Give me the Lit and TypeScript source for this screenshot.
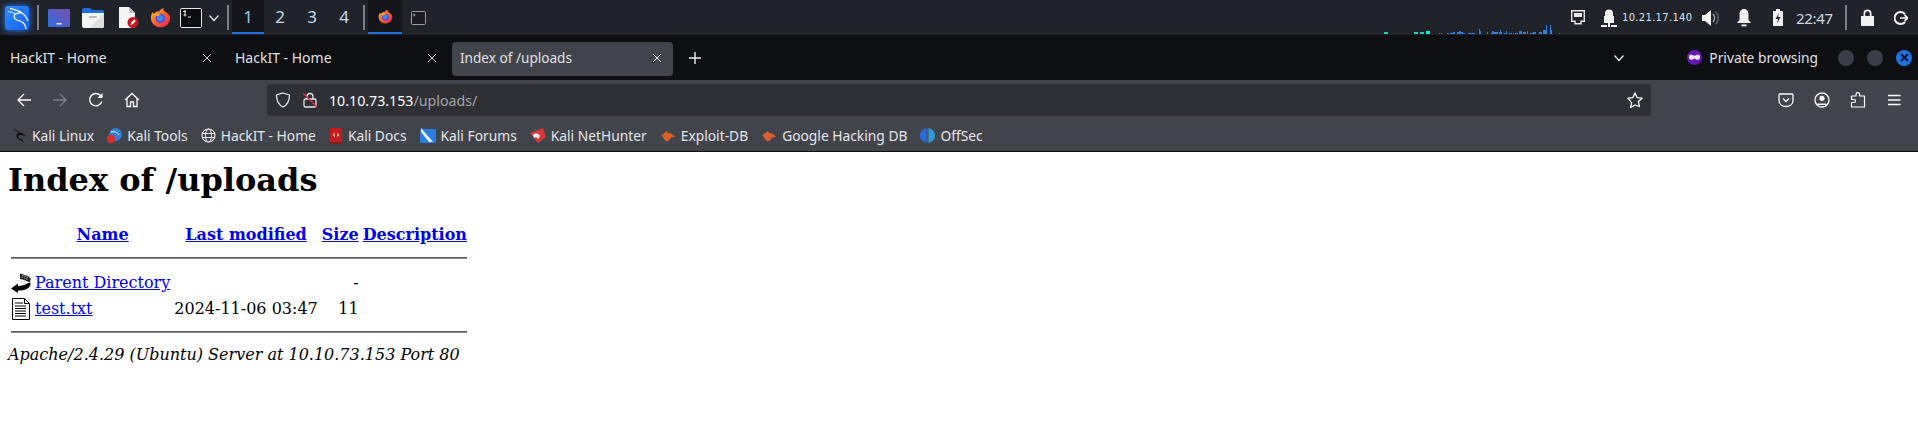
import { LitElement, html, css, svg } from "lit";
import { customElement } from "lit/decorators.js";

const firefox = (s: number) => html`<svg width=${s} height=${s} viewBox="0 0 24 24">
  <defs><linearGradient id="ffg" x1="0" y1="0" x2="1" y2="1"><stop offset="0" stop-color="#ffbd2e"/><stop offset=".55" stop-color="#ff5a2b"/><stop offset="1" stop-color="#e0224f"/></linearGradient></defs>
  <path d="M12 23C5.600 23 1 18.200 1 12.200 1 9.700 1.800 7.500 3.200 5.800L4.500 8C6 5.700 8.200 4.700 10.500 5 11 3.300 13 1.800 15.500 1c-.6 2 .2 3.300 2 4.500C20.500 7.500 23 9.500 23 12.500 23 18.500 18.400 23 12 23z" fill="url(#ffg)"/>
  <circle cx="11.800" cy="13" r="5.600" fill="#5b4fd8"/><circle cx="11.300" cy="12.500" r="3.400" fill="#3d8fe8"/>
  <path d="M5 9.500c2-1.800 5-2.300 7.500-1.200-1.300.2-2.300.8-3 1.700-1 .2-3 .2-4.500-.5z" fill="#ffb02e"/>
</svg>`;

const kali = html`<svg class="kali" width="24" height="24" viewBox="0 0 24 24">
  <defs><linearGradient id="kg" x1="0" y1="0" x2="1" y2="1"><stop offset="0" stop-color="#2f8dff"/><stop offset="1" stop-color="#1660e8"/></linearGradient></defs>
  <rect width="24" height="24" rx="3" fill="url(#kg)"/>
  <path d="M5 2.500C9 3.500 13.500 4.500 16.500 6.700 19.500 8.500 21.500 11 23 15M16.500 6.700C13 7 9 8 9 10.500 9 13.500 13 14.500 16 15.500 19 16.500 20.500 19 21 23" fill="none" stroke="#f4f8ff" stroke-width="1.300"/>
  <path d="M3 5.500C6 6 8.500 6.800 10.500 7.800M12 4.500l2 1.500" fill="none" stroke="#f4f8ff" stroke-width=".9"/>
</svg>`;

const sparkBars: [number, number, number, string][] = [
  [24, 32, 4, "#1dd3b0"], [54, 32, 4, "#1dd3b0"], [60, 32, 4, "#1dd3b0"], [66, 31, 4, "#12e6c8"],
  [79, 33, 1, "#2f7fe6"], [81, 33, 1, "#2f7fe6"], [87, 33, 2, "#2f7fe6"], [90, 33, 4, "#2f7fe6"], [93, 32, 2, "#2f7fe6"],
  [97, 32, 5, "#2f7fe6"], [99, 31, 2, "#2f7fe6"], [101, 32, 2, "#2f7fe6"], [103, 33, 2, "#2f7fe6"], [108, 33, 7, "#2f7fe6"],
  [119, 29, 1, "#2f7fe6"], [120, 31, 1, "#2f7fe6"], [127, 32, 1, "#2f7fe6"],
  [131, 33, 1, "#2f7fe6"], [132, 31, 2, "#2f7fe6"], [134, 32, 4, "#2f7fe6"], [139, 32, 3, "#2f7fe6"], [140, 30, 1, "#2f7fe6"], [144, 33, 3, "#2f7fe6"], [146, 31, 1, "#2f7fe6"], [149, 33, 3, "#2f7fe6"],
  [153, 33, 1, "#2f7fe6"], [155, 33, 3, "#2f7fe6"], [159, 31, 3, "#2f7fe6"], [163, 32, 3, "#2f7fe6"], [167, 31, 1, "#2f7fe6"], [170, 33, 3, "#2f7fe6"],
  [173, 32, 3, "#2f7fe6"], [179, 32, 3, "#2f7fe6"], [183, 30, 4, "#2f7fe6"], [186, 25, 1, "#2f7fe6"], [190, 25, 1, "#2f7fe6"], [191, 30, 1, "#2f7fe6"], [199, 33, 1, "#2f7fe6"],
];

@customElement("app-root")
export class AppRoot extends LitElement {
  static styles = css`
    :host { display: block; width: 1918px; height: 435px; background: #fff; overflow: hidden; font-family: "Noto Sans", sans-serif; }
    svg { display: block; flex: none; }
    .taskbar { height: 35px; background: #21232b; display: flex; align-items: center; color: #dfe3e8; }
    .tb-icon { display: flex; align-items: center; justify-content: center; flex: none; }
    .kali-wrap { margin-left: 5px; width: 24px; height: 24px; filter: drop-shadow(0 0 3px #1e78ff); }
    .sep { width: 2px; height: 25px; background: #7d8087; flex: none; }
    .s1 { margin-left: 8px; }
    .w-app { margin-left: 9px; }
    .w-folder { margin-left: 12px; }
    .w-doc { margin-left: 14px; }
    .w-ff { margin-left: 11px; }
    .w-term { margin-left: 9px; }
    .w-chev { margin-left: 5px; }
    .s2 { margin-left: 6px; }
    .desks { display: flex; margin-left: 3px; align-self: flex-start; }
    .desk { width: 32px; height: 34px; box-sizing: border-box; display: flex; align-items: center; justify-content: center; font-size: 17px; color: #c4dcf2; border-bottom: 2px solid transparent; }
    .desk.on { background: #14161b; border-bottom-color: #1f73e0; color: #9cc6ee; }
    .s3 { margin-left: 3px; }
    .ff-task { margin-left: 3px; width: 34px; height: 34px; align-self: flex-start; box-sizing: border-box; background: #14161b; border-bottom: 2px solid #1f73e0; display: flex; align-items: center; justify-content: center; }
    .t-term { margin-left: 9px; }
    .spark { margin-left: auto; align-self: flex-start; }
    .tray { display: flex; align-items: center; padding-right: 10px; }
    .m-netlock { margin-left: 16px; }
    .ip { letter-spacing: .3px; color: #dde3ea; margin-left: 5px; width: 71px; white-space: nowrap; font-family: "DejaVu Sans", sans-serif; font-size: 10px; }
    .m-vol { margin-left: 9px; }
    .m-bell { margin-left: 18px; }
    .m-bat { margin-left: 22px; }
    .clock { font-size: 15px; letter-spacing: -.3px; color: #cfd8e2; margin-left: 13px; width: 37px; white-space: nowrap; }
    .m-sep { margin-left: 12px; }
    .m-lock { margin-left: 14px; }
    .m-out { margin-left: 20px; }
    .tabs { height: 45px; background: #0e0f13; display: flex; align-items: center; color: #e0e0e4; font-size: 14px; box-sizing: border-box; }
    .tab { width: 224px; height: 34px; box-sizing: border-box; padding: 0 12px 2px 10px; display: flex; align-items: center; justify-content: space-between; white-space: nowrap; flex: none; margin-top: 2px; }
    .tab + .tab { margin-left: 1px; }
    .tab.on { background: #42444c; border-radius: 4px; margin-left: 3px; padding: 0 11px 2px 8px; width: 221px; font-size: 13.600px; }
    .plus { margin-left: 15px; }
    .chev { margin-left: auto; }
    .pb { display: flex; align-items: center; margin-left: 61px; gap: 7px; font-size: 13.800px; white-space: nowrap; }
    .dots { display: flex; gap: 13px; margin-left: 20px; margin-right: 6px; }
    .dot { width: 16px; height: 16px; border-radius: 50%; background: #3a3e48; flex: none; }
    .dot.x { background: #1f73e0; display: flex; align-items: center; justify-content: center; }
    .nav { height: 40px; background: #42444c; display: flex; align-items: center; color: #fbfbfe; }
    .nav-btn { flex: none; display: flex; justify-content: center; align-items: center; width: 36px; }
    .m-back { margin-left: 6px; }
    .urlbar { margin-left: 117px; width: 1384px; height: 32px; background: #2f3036; border-radius: 4px; display: flex; align-items: center; box-sizing: border-box; padding: 0 8px; flex: none; font-size: 14.200px; }
    .m-ulock { margin-left: 12px; }
    .url { margin-left: 12px; color: #fbfbfe; white-space: nowrap; }
    .url span { color: #a3a4a9; }
    .star { margin-left: auto; }
    .m-pocket { margin-left: 117px; }
    .bm { height: 31px; background: #42444c; display: flex; align-items: center; padding-left: 12px; color: #e6e6ea; font-size: 13.800px; border-bottom: 1px solid #0e0f13; }
    .bm-item { display: flex; align-items: center; gap: 5px; white-space: nowrap; margin-right: 13px; }
    .page { font-family: "DejaVu Serif", serif; color: #000; font-size: 16px; padding: 0 8px; }
    .page h1 { font-size: 32px; margin: 9.440px 0 21.440px; font-weight: bold; }
    .page a { color: #0000ee; text-decoration: underline; }
    .page td, .page th { padding: 1px; }
    .page .r { text-align: right; }
    .page address { font-style: italic; }
    .page hr { margin: 7px 0 9px; border: none; border-top: 1px solid #5c5c5c; border-bottom: 1px solid #8a8a8a; height: 0; }
    .ph { width: 20px; height: 22px; }
  `;

  render() {
    const chevron = (c = "#e6e6ea") => html`<svg width="14" height="14" viewBox="0 0 14 14"><path d="M2.500 4.500 7 9.500l4.500-5" fill="none" stroke=${c} stroke-width="1.300"/></svg>`;
    const bmText = (t: string, icon: unknown) => html`<div class="bm-item">${icon}<span>${t}</span></div>`;
    const flame = html`<svg width="16" height="14" viewBox="0 0 16 14"><path d="M1 6c3-1 4-3 6-4l1 2c3 0 6 2 7 4l-4 .5C10 11 8 13 6 12 4 11 4 9 1 6z" fill="#d9602a"/></svg>`;
    const close = (c: string) => html`<svg width="10" height="10" viewBox="0 0 10 10"><path d="M1 1l8 8M9 1l-8 8" stroke=${c} stroke-width="1"/></svg>`;
    return html`
      <div class="taskbar">
        <div class="tb-icon kali-wrap">${kali}</div>
        <div class="sep s1"></div>
        <div class="tb-icon w-app"><svg width="22" height="18" viewBox="0 0 22 18"><defs><linearGradient id="wa" x1="0" y1="1" x2="1" y2="0"><stop offset="0" stop-color="#2f6fe0"/><stop offset="1" stop-color="#7a4fb0"/></linearGradient></defs><rect width="22" height="18" rx="1" fill="url(#wa)"/><rect x="8.500" y="14" width="5" height="1.500" fill="#e8e8f4"/></svg></div>
        <div class="tb-icon w-folder"><svg width="22" height="20" viewBox="0 0 22 20"><path d="M0 2q0-2 2-2h6l2 2h10q2 0 2 2v3H0z" fill="#1f6fd8"/><path d="M0 5h22v13q0 2-2 2H2q-2 0-2-2z" fill="#f2f3f4"/><path d="M22 5v13q0 2-2 2H8z" fill="#dcdee0"/><rect x="7" y="8" width="8" height="2" rx="1" fill="#b8babd"/></svg></div>
        <div class="tb-icon w-doc"><svg width="21" height="21" viewBox="0 0 21 21"><path d="M1 0h10l6 6v15H1z" fill="#f4f4f4"/><path d="M11 0l6 6h-6z" fill="#c4c4c4"/><circle cx="15" cy="15.500" r="5.500" fill="#c4161c"/><path d="M12.500 18l1-3 3-2.500 1.300 1.300-2.500 3z" fill="#fff"/></svg></div>
        <div class="tb-icon w-ff">${firefox(21)}</div>
        <div class="tb-icon w-term"><svg width="22" height="20" viewBox="0 0 22 20"><rect x=".5" y=".5" width="21" height="19" rx="1" fill="#0c0d10" stroke="#e8e8e8"/><path d="M3.500 7h3M3 3.500h3M5 2v6.500M8 9h3" stroke="#e8e8e8" stroke-width="1" fill="none"/></svg></div>
        <div class="tb-icon w-chev">${chevron("#e6e6ea")}</div>
        <div class="sep s2"></div>
        <div class="desks">
          <div class="desk on">1</div><div class="desk">2</div><div class="desk">3</div><div class="desk">4</div>
        </div>
        <div class="sep s3"></div>
        <div class="ff-task">${firefox(15)}</div>
        <div class="tb-icon t-term"><svg width="15" height="14" viewBox="0 0 15 14"><rect x=".5" y=".5" width="14" height="13" rx="1" fill="#191b20" stroke="#9a9ca2"/><path d="M2.500 4h2M3 2.500v3" stroke="#9a9ca2"/></svg></div>
        <svg class="spark" width="211" height="34" viewBox="0 0 211 34">${sparkBars.map(([x, y, w, c]) => svg`<rect x=${x} y=${y} width=${w} height=${34 - y} fill=${c}/>`)}</svg>
        <div class="tray">
          <div class="tb-icon"><svg width="14" height="15" viewBox="0 0 14 15"><path d="M.7.7h12.600v10.600h-3.300v2.500H4v-2.500H.7z" fill="none" stroke="#e8e8e8" stroke-width="1.400"/><path d="M3 3h8v4H3z" fill="#e8e8e8"/></svg></div>
          <div class="tb-icon m-netlock"><svg width="16" height="18" viewBox="0 0 16 18"><path d="M4 7V4.500a4 4 0 0 1 8 0V7h1v7H3V7z" fill="#f2f2f2"/><rect y="16" width="6" height="2" fill="#f2f2f2"/><rect x="10" y="16" width="6" height="2" fill="#f2f2f2"/><rect x="7" y="14" width="2" height="4" fill="#f2f2f2"/></svg></div>
          <div class="ip">10.21.17.140</div>
          <div class="tb-icon m-vol"><svg width="17" height="18" viewBox="0 0 17 18"><path d="M0 6h3l6-5v16l-6-5H0z" fill="#f2f2f2"/><path d="M11 5a6 6 0 0 1 0 8" fill="none" stroke="#a0a2a8" stroke-width="1.600"/><path d="M13.500 2.500a9 9 0 0 1 0 13" fill="none" stroke="#5f6168" stroke-width="1.400"/></svg></div>
          <div class="tb-icon m-bell"><svg width="14" height="18" viewBox="0 0 14 18"><path d="M7 0c3 0 4.500 2.500 4.500 5.500V11l2.500 3H0l2.500-3V5.500C2.500 2.500 4 0 7 0z" fill="#f2f2f2"/><rect x="4.500" y="15.500" width="5" height="1.800" fill="#f2f2f2"/></svg></div>
          <div class="tb-icon m-bat"><svg width="10" height="17" viewBox="0 0 10 17"><path d="M3 0h4v2h3v15H0V2h3z" fill="#f2f2f2"/><path d="M6 4 2.500 10H5l-1 4.500L7.500 8H5z" fill="#21232b"/></svg></div>
          <div class="clock">22:47</div>
          <div class="sep m-sep"></div>
          <div class="tb-icon m-lock"><svg width="13" height="17" viewBox="0 0 13 17"><path d="M2.500 7V4.500a4 4 0 0 1 8 0V7H13v10H0V7zM4.200 7h4.600V4.500a2.300 2.300 0 0 0-4.600 0z" fill="#f2f2f2" fill-rule="evenodd"/></svg></div>
          <div class="tb-icon m-out"><svg width="14" height="14" viewBox="0 0 14 14"><path d="M11 3A6 6 0 1 0 11 11" fill="none" stroke="#f2f2f2" stroke-width="2"/><path d="M6 7h7.500M10.500 4 14 7l-3.500 3" fill="none" stroke="#f2f2f2" stroke-width="1.700"/></svg></div>
        </div>
      </div>

      <div class="tabs">
        <div class="tab"><span>HackIT - Home</span>${close("#cfcfd4")}</div>
        <div class="tab"><span>HackIT - Home</span>${close("#cfcfd4")}</div>
        <div class="tab on"><span>Index of /uploads</span>${close("#e6e6ea")}</div>
        <svg class="plus" width="14" height="14" viewBox="0 0 14 14"><path d="M7 1v12M1 7h12" stroke="#f0f0f4" stroke-width="1.400"/></svg>
        <div class="chev">${chevron("#f0f0f4")}</div>
        <div class="pb"><svg width="15" height="15" viewBox="0 0 14 14"><circle cx="7" cy="7" r="7" fill="#6a18b8"/><path d="M1.800 6c0-1.500 2-1.800 3.200-1.300.8.300 1.400.6 2 .6s1.200-.3 2-.6c1.200-.5 3.200-.2 3.200 1.300 0 2-1 3.200-2.500 3.200S7.900 8 7 8s-1.200 1.200-2.700 1.200S1.800 8 1.800 6z" fill="#f3e8ff"/></svg><span>Private browsing</span></div>
        <div class="dots"><div class="dot"></div><div class="dot"></div><div class="dot x"><svg width="9" height="9" viewBox="0 0 9 9"><path d="M1 1l7 7M8 1l-7 7" stroke="#0c1730" stroke-width="2"/></svg></div></div>
      </div>

      <div class="nav">
        <div class="nav-btn m-back"><svg width="16" height="16" viewBox="0 0 16 16"><path d="M15 8H2M8 2 2 8l6 6" fill="none" stroke="#fbfbfe" stroke-width="1.400"/></svg></div>
        <div class="nav-btn"><svg width="16" height="16" viewBox="0 0 16 16"><path d="M1 8h13M8 2l6 6-6 6" fill="none" stroke="#7f8086" stroke-width="1.400"/></svg></div>
        <div class="nav-btn"><svg width="16" height="16" viewBox="0 0 16 16"><path d="M13.800 9.500A6.200 6.200 0 1 1 12.300 3.300L14 5" fill="none" stroke="#fbfbfe" stroke-width="1.400"/><path d="M14.500 1v5h-5z" fill="#fbfbfe"/></svg></div>
        <div class="nav-btn"><svg width="16" height="16" viewBox="0 0 16 16"><path d="M1 8 8 1.500 15 8M3 6.500V14.500H6.500V10h3v4.500H13V6.500" fill="none" stroke="#fbfbfe" stroke-width="1.300"/></svg></div>
        <div class="urlbar">
          <svg width="16" height="16" viewBox="0 0 16 16"><path d="M8 1 14.500 3c0 6-1.500 9.500-6.500 12C3 12.500 1.500 9 1.500 3z" fill="none" stroke="#e6e6ea" stroke-width="1.300"/></svg>
          <svg class="m-ulock" width="14" height="16" viewBox="0 0 14 16"><rect x="1" y="7" width="12" height="8" rx="1.500" fill="none" stroke="#e6e6ea" stroke-width="1.300"/><path d="M4 7V4.500a3 3 0 0 1 6 0V7" fill="none" stroke="#e6e6ea" stroke-width="1.300"/><path d="M0 1l14 14" stroke="#e22850" stroke-width="1.300"/></svg>
          <div class="url">10.10.73.153<span>/uploads/</span></div>
          <svg class="star" width="16" height="16" viewBox="0 0 16 16"><path d="M8 1l2.100 4.600 5 .6-3.700 3.400 1 4.900L8 13l-4.400 2.500 1-4.900L.9 6.200l5-.6z" fill="none" stroke="#fbfbfe" stroke-width="1.300" stroke-linejoin="round"/></svg>
        </div>
        <div class="nav-btn m-pocket"><svg width="16" height="16" viewBox="0 0 16 16"><path d="M2 2h12q1 0 1 1v5c0 4-3 6.500-7 6.500S1 12 1 8V3q0-1 1-1z" fill="none" stroke="#fbfbfe" stroke-width="1.300"/><path d="M5 6.500 8 9.500l3-3" fill="none" stroke="#fbfbfe" stroke-width="1.300"/></svg></div>
        <div class="nav-btn"><svg width="16" height="16" viewBox="0 0 16 16"><circle cx="8" cy="8" r="7" fill="none" stroke="#fbfbfe" stroke-width="1.300"/><circle cx="8" cy="6.300" r="2.600" fill="#fbfbfe"/><path d="M3.500 11.500h9v1.500h-9z" fill="#fbfbfe"/></svg></div>
        <div class="nav-btn"><svg width="16" height="16" viewBox="0 0 16 16"><path d="M1.500 15V10.500H4a1.500 1.500 0 0 0 0-3H1.500V4H6V2.500a1.800 1.800 0 0 1 3.600 0V4h4.900v11z" fill="none" stroke="#fbfbfe" stroke-width="1.200" stroke-linejoin="round"/></svg></div>
        <div class="nav-btn"><svg width="16" height="16" viewBox="0 0 16 16"><path d="M2 3.500h12.500M2 8h12.500M2 12.500h12.500" stroke="#fbfbfe" stroke-width="1.300"/></svg></div>
      </div>

      <div class="bm">
        ${bmText("Kali Linux", html`<svg width="15" height="15" viewBox="0 0 15 15"><path d="M0 1c3 0 5 1 7 3 3 .5 6 2.500 7.500 5-2-1.500-4-2-6-2-1.500 0-3 .5-2.500 2 .5 1.500 3 1.500 4.500 3 .7.700 1 1.500 1.200 3-1-2-2.500-2.500-4.500-3.500C5 10.500 4 9 4.500 7 5 6 6 5 7 5 5 3 3 2 0 1z" fill="#111"/></svg>`)}
        ${bmText("Kali Tools", html`<svg width="15" height="15" viewBox="0 0 15 15"><circle cx="8.500" cy="6.500" r="6.500" fill="#2f7fd8"/><path d="M4 4c3-1 6 0 8 3" stroke="#fff" fill="none"/><circle cx="4" cy="11" r="4" fill="#e02a2a"/></svg>`)}
        ${bmText("HackIT - Home", html`<svg width="15" height="15" viewBox="0 0 15 15"><circle cx="7.500" cy="7.500" r="6.500" fill="none" stroke="#e6e6ea" stroke-width="1.200"/><ellipse cx="7.500" cy="7.500" rx="3" ry="6.500" fill="none" stroke="#e6e6ea" stroke-width="1"/><path d="M1 5.500h13M1 9.500h13" stroke="#e6e6ea"/></svg>`)}
        ${bmText("Kali Docs", html`<svg width="14" height="16" viewBox="0 0 14 16"><rect x="1" width="12" height="14" fill="#c51c20"/><rect x="1" y="14" width="12" height="2" fill="#7a2020"/><path d="M4 7l2-1.500M4 7l2 1.500M10 7 8 5.500M10 7 8 8.500" stroke="#fff"/></svg>`)}
        ${bmText("Kali Forums", html`<svg width="16" height="15" viewBox="0 0 16 15"><rect y="1" width="16" height="14" rx="1" fill="#2a7de0"/><path d="M1 0 13 14H9L1 4z" fill="#f2f2f2"/></svg>`)}
        ${bmText("Kali NetHunter", html`<svg width="16" height="15" viewBox="0 0 16 15"><path d="M0 5 13 0l3 9-8 6z" fill="#d8383a"/><path d="M3 7c2-2 5-2 7 1l-2 3C7 9 5 9 4 10z" fill="#f4f4f4"/></svg>`)}
        ${bmText("Exploit-DB", flame)}
        ${bmText("Google Hacking DB", flame)}
        ${bmText("OffSec", html`<svg width="15" height="15" viewBox="0 0 15 15"><path d="M6.500 0C2.500 1 0 4 0 7.500S2.500 14 6.500 15z" fill="#2a6ae0"/><path d="M8.500 0c4 1 6.500 4 6.500 7.500S12.500 14 8.500 15z" fill="#2a9ad8"/><path d="M7 1h1v13H7z" fill="#7a3ab0"/></svg>`)}
      </div>

      <div class="page">
        <h1>Index of /uploads</h1>
        <table>
          <tr><th><div class="ph"></div></th><th><a href="#">Name</a></th><th><a href="#">Last modified</a></th><th><a href="#">Size</a></th><th><a href="#">Description</a></th></tr>
          <tr><th colspan="5"><hr></th></tr>
          <tr>
            <td><svg width="20" height="22" viewBox="0 0 20 22"><path d="M0 16.500 7 11.500v2.500c4 0 7-1 9-2.500l3.500-1c.5 3-1.500 5.500-5 7-2 .8-4.500 1-7.500 1v2.500z" fill="#000"/><path d="M9 1.500 17 4l3 3-1.500 3.500c-2-1.500-6-3-9.500-3.500z" fill="#222"/><path d="M11 3l6 2.500M10.500 5l6.500 2.500" stroke="#aaa" stroke-dasharray="1.500 1"/></svg></td>
            <td><a href="#">Parent Directory</a></td><td>&nbsp;</td><td class="r">- </td><td>&nbsp;</td>
          </tr>
          <tr>
            <td><svg width="20" height="22" viewBox="0 0 20 22"><path d="M1.500 .5h12l5 5v16h-17z" fill="#fff" stroke="#000"/><path d="M13.500 .5v5h5" fill="none" stroke="#000"/><path d="M4 5h8M4 8h11M4 10.500h11M4 13h11M4 15.500h11M4 18h11" stroke="#000" stroke-width="1"/></svg></td>
            <td><a href="#">test.txt</a></td><td class="r">2024-11-06 03:47 </td><td class="r">11 </td><td>&nbsp;</td>
          </tr>
          <tr><th colspan="5"><hr></th></tr>
        </table>
        <address>Apache/2.4.29 (Ubuntu) Server at 10.10.73.153 Port 80</address>
      </div>
    `;
  }
}
